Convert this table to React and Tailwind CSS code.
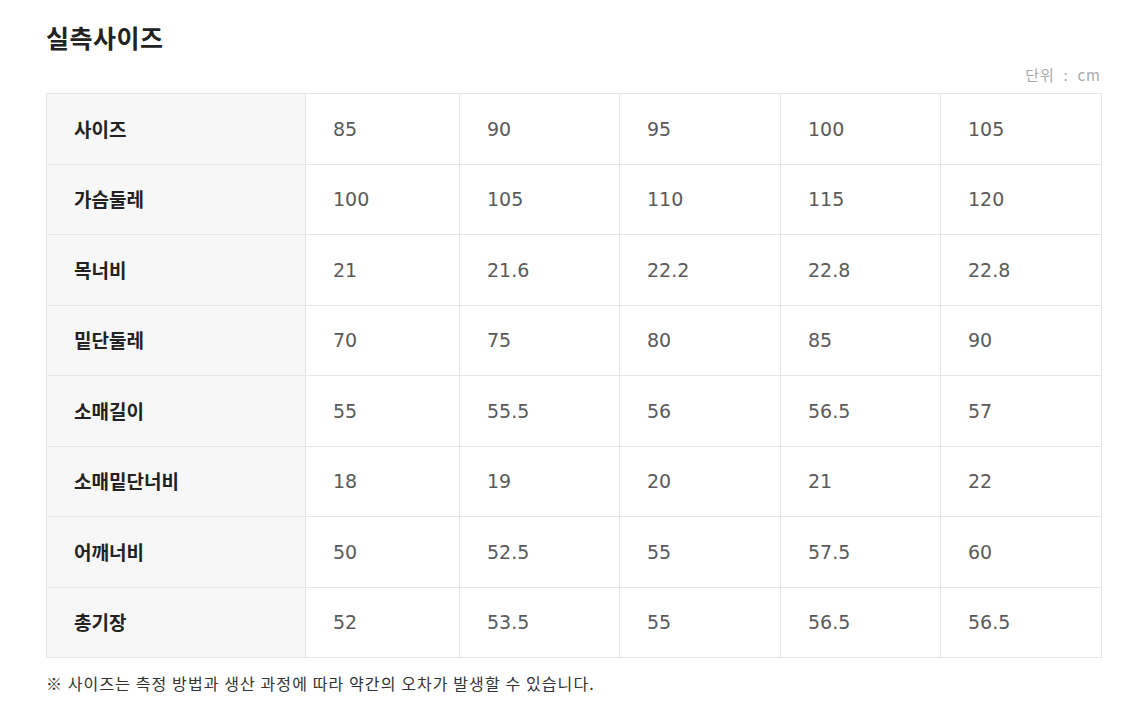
import React from 'react';

const rows = [
    ['사이즈', '85', '90', '95', '100', '105'],
    ['가슴둘레', '100', '105', '110', '115', '120'],
    ['목너비', '21', '21.6', '22.2', '22.8', '22.8'],
    ['밑단둘레', '70', '75', '80', '85', '90'],
    ['소매길이', '55', '55.5', '56', '56.5', '57'],
    ['소매밑단너비', '18', '19', '20', '21', '22'],
    ['어깨너비', '50', '52.5', '55', '57.5', '60'],
    ['총기장', '52', '53.5', '55', '56.5', '56.5'],
];

const colWidths = ['w-[259px]', 'w-[154px]', 'w-[160px]', 'w-[161px]', 'w-[160px]', 'w-[161px]'];

const App = () => {
    return (
        <div className="w-[1125px] h-[705px] bg-white font-['DejaVu_Sans','Noto_Sans_CJK_KR',sans-serif]">
            <div className="pl-[46px] pr-[24px] pt-[21px]">
                <h1 className="text-[25px] leading-[32px] font-bold text-[#222] tracking-[0.5px] font-['Noto_Sans_CJK_KR',sans-serif]">실측사이즈</h1>

                <div className="flex justify-end mt-[12px] h-[20px] items-center">
                    <span className="text-[15px] text-[#aaa] tracking-[1px] font-['Noto_Sans_CJK_KR',sans-serif]">단위 &nbsp;:&nbsp; cm</span>
                </div>

                <table className="mt-[8px] border-collapse table-fixed w-[1055px]">
                    <colgroup>
                        {colWidths.map((w, i) => (
                            <col key={i} className={w} />
                        ))}
                    </colgroup>
                    <tbody>
                        {rows.map((row, ri) => (
                            <tr key={ri} className="h-[70.5px]">
                                {row.map((cell, ci) => (
                                    ci === 0 ? (
                                        <th
                                            key={ci}
                                            className="border border-[#e6e6e6] bg-[#f7f7f7] text-left pl-[27px] text-[19px] font-bold text-[#222] font-['Noto_Sans_CJK_KR',sans-serif]"
                                        >
                                            {cell}
                                        </th>
                                    ) : (
                                        <td
                                            key={ci}
                                            className="border border-[#e6e6e6] text-left pl-[27px] text-[19px] text-[#5a5a5a]"
                                        >
                                            {cell}
                                        </td>
                                    )
                                ))}
                            </tr>
                        ))}
                    </tbody>
                </table>

                <p className="mt-[13px] text-[16px] tracking-[1.1px] text-[#333] font-['Noto_Sans_CJK_KR',sans-serif]">
                    ※ 사이즈는 측정 방법과 생산 과정에 따라 약간의 오차가 발생할 수 있습니다.
                </p>
            </div>
        </div>
    );
};

export default App;
